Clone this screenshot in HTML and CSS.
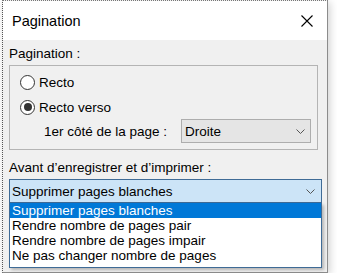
FILE: index.html
```html
<!DOCTYPE html>
<html lang="fr">
<head>
    <meta charset="UTF-8">
    <meta name="viewport" content="width=device-width, initial-scale=1.0">
    <title>Pagination</title>
    <link rel="stylesheet" href="styles.css">
</head>
<body>
    <div class="window">
        <div class="titlebar">
            <span class="title">Pagination</span>
            <svg class="close" width="12" height="12" viewBox="0 0 12 12">
                <path d="M0.5 0.5 L11.5 11.5 M11.5 0.5 L0.5 11.5" stroke="#000" stroke-width="1.1" fill="none"/>
            </svg>
        </div>

        <div class="content">
            <div class="label">Pagination :</div>
            <div class="group">
                <div class="radio"><span class="circle"></span>Recto</div>
                <div class="radio"><span class="circle checked"></span>Recto verso</div>
                <div class="side-row">
                    <span>1er côté de la page :</span>
                    <div class="select">
                        <span>Droite</span>
                        <svg class="chevron" width="9" height="5" viewBox="0 0 9 5">
                            <path d="M0.5 0.5 L4.5 4.5 L8.5 0.5" stroke="#555" stroke-width="1" fill="none"/>
                        </svg>
                    </div>
                </div>
            </div>

            <div class="label label-second">Avant d’enregistrer et d’imprimer :</div>
            <div class="combo">
                <span>Supprimer pages blanches</span>
                <svg class="chevron" width="9" height="5" viewBox="0 0 9 5">
                    <path d="M0.5 0.5 L4.5 4.5 L8.5 0.5" stroke="#555" stroke-width="1" fill="none"/>
                </svg>
            </div>
            <ul class="list">
                <li class="selected">Supprimer pages blanches</li>
                <li>Rendre nombre de pages pair</li>
                <li>Rendre nombre de pages impair</li>
                <li>Ne pas changer nombre de pages</li>
            </ul>
        </div>
    </div>
</body>
</html>
```

FILE: styles.css
```css
body {
    margin: 0;
    background: #fff;
    font-family: "Liberation Sans", Arial, sans-serif;
    font-size: 13.5px;
    color: #000;
}
.window {
    box-sizing: border-box;
    width: 326px;
    height: 273px;
    margin-left: 2px;
    background: #f0f0f0;
    border: 1px solid #8c8c8c;
    border-left: 1px dotted #555;
    border-top: 1px dotted #777;
    box-shadow: 2px 2px 8px rgba(0,0,0,0.18);
}
.titlebar {
    height: 38px;
    background: #fff;
    display: flex;
    align-items: center;
    justify-content: space-between;
    padding: 1px 14px 0 9px;
}
.title {
    font-size: 14.5px;
}
.content {
    padding: 6px 5px 0 6px;
}
.label {
    line-height: 16px;
    height: 16px;
}
.label-second {
    margin-top: 10px;
}
.group {
    margin: 3px 4px 0 0;
    border: 1px solid #b4b4b4;
    padding: 6px 0 6px 0;
}
.radio {
    display: flex;
    align-items: center;
    height: 20px;
    padding-left: 10px;
}
.radio + .radio {
    margin-top: 5px;
}
.circle {
    box-sizing: border-box;
    width: 15px;
    height: 15px;
    border: 1px solid #333;
    border-radius: 50%;
    background: #fff;
    margin-right: 4px;
    display: flex;
    align-items: center;
    justify-content: center;
}
.circle.checked::after {
    content: "";
    width: 8px;
    height: 8px;
    border-radius: 50%;
    background: #333;
}
.side-row {
    display: flex;
    align-items: center;
    margin-top: 2px;
    padding-left: 34px;
}
.select {
    box-sizing: border-box;
    margin-left: auto;
    margin-right: 6px;
    width: 130px;
    height: 24px;
    background: #e5e5e5;
    border: 1px solid #adadad;
    display: flex;
    align-items: center;
    justify-content: space-between;
    padding: 0 5px 0 3px;
}
.combo {
    box-sizing: border-box;
    margin-top: 3px;
    height: 24px;
    background: #cce4f7;
    border: 1px solid #3f6b96;
    display: flex;
    align-items: center;
    justify-content: space-between;
    padding: 0 6px 0 2px;
}
.list {
    list-style: none;
    margin: 0;
    padding: 0 0 4px 0;
    background: #fff;
    border: 1px solid #3f6b96;
    border-top: 0;
    box-shadow: 2px 2px 3px rgba(0,0,0,0.25);
}
.list li {
    height: 15px;
    line-height: 15px;
    padding-left: 2px;
}
.list li.selected {
    background: #0078d7;
    color: #fff;
}
```
